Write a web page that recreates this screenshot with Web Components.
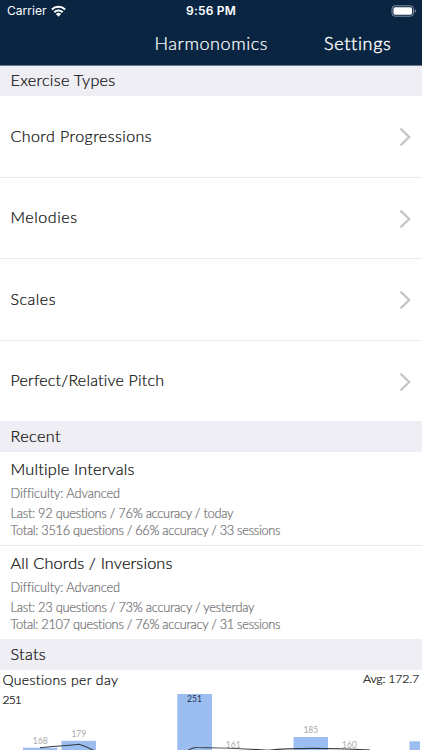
<!DOCTYPE html>
<html lang="en">
<head>
<meta charset="utf-8">
<title>Harmonomics</title>
<style>
html,body{margin:0;height:750px;overflow:hidden;background:#fff}
body{font-family:Lato,"Open Sans",sans-serif;font-weight:300;color:#0a0a0a;-webkit-text-stroke:.22px currentColor}
</style>
</head>
<body>
<harmonomics-app></harmonomics-app>
<script>
const define=(name,html,setup)=>customElements.define(name,class extends HTMLElement{
  connectedCallback(){
    if(this.shadowRoot)return;
    const root=this.attachShadow({mode:'open'});
    const t=document.createElement('template');
    t.innerHTML=html;
    root.append(t.content.cloneNode(true));
    if(setup)setup(this,root);
  }
});

// A single line whose tracking is adjusted so that it spans the given width.
define('fit-text',`<style>:host{display:block;white-space:nowrap}span{display:inline-block}</style><span><slot></slot></span>`,(el,root)=>{
  const s=root.querySelector('span');
  const gap=(+el.getAttribute('w')-s.getBoundingClientRect().width)/el.textContent.length;
  s.style.letterSpacing=gap.toFixed(3)+'px';
});

define('status-bar',`<style>
:host{display:grid;grid-template-columns:1fr auto 1fr;align-items:center;height:22px;padding:0 5px 0 7px;color:#fff;font:12px/22px Inter,sans-serif;-webkit-text-stroke:0}
.l{display:flex;gap:5px;align-items:center}.r{display:flex;justify-content:flex-end}
.c{font-weight:600;margin-right:2px}svg{display:block}
</style>
<div class="l"><fit-text w="39.5">Carrier</fit-text><svg width="15" height="12" viewBox="0 0 15 12" style="margin:-1px 0 0 -1px"><g fill="none" stroke="#fff" stroke-width="2.1"><path d="M.9 4.5a9.3 9.3 0 0 1 13.2 0"/><path d="M3.3 7.2a5.9 5.9 0 0 1 8.4 0"/></g><path d="M7.5 11.7 4.9 9.1a3.7 3.7 0 0 1 5.2 0z" fill="#fff"/></svg></div>
<div class="c"><fit-text w="50">9:56 PM</fit-text></div>
<div class="r"><svg width="26" height="12" viewBox="0 0 26 12" style="margin-top:-1px"><rect x="1" y=".8" width="21.5" height="10.4" rx="3" fill="none" stroke="#8492a2"/><rect x="2.4" y="2.2" width="18.7" height="7.6" rx="1.7" fill="#fff"/><path d="M23.7 4.2q1.4.5 1.4 1.8t-1.4 1.8z" fill="#8492a2"/></svg></div>`);

define('nav-bar',`<style>
:host{display:grid;grid-template-columns:1fr 113px 1fr;height:43px;color:#fff;line-height:42px}
.t{grid-column:2;font-size:18px}.s{padding-left:56.5px;font-size:18px;-webkit-text-stroke:.4px #fff}
</style><fit-text class="t" w="113.5">Harmonomics</fit-text><fit-text class="s" w="67">Settings</fit-text>`);

define('section-header',`<style>
:host{display:block;box-sizing:border-box;height:31px;padding-left:10.5px;background:#efeef5;font-size:16.2px;line-height:30px}
</style><slot></slot>`);

define('exercise-row',`<style>
:host{display:flex;box-sizing:border-box;height:81.5px;justify-content:space-between;align-items:center;padding:0 10.5px;border-bottom:1px solid #ececee;font-size:16px}
:host(:last-of-type){border-bottom:0;height:80.5px}
svg{display:block;margin-top:2px}
::slotted(fit-text){margin-top:-2px}
</style><slot></slot><svg width="13" height="20" viewBox="0 0 13 20"><path d="M1.5 1.7 10.2 10l-8.7 8.3" fill="none" stroke="#c6c6c8" stroke-width="2.3"/></svg>`);

define('recent-item',`<style>
:host{display:block;box-sizing:border-box;height:94px;padding:4px 10.5px 0;border-bottom:1px solid #e8e8ea;color:#727274;font-size:12.8px;line-height:17px}
:host(:last-of-type){border-bottom:0;height:93px}
::slotted([slot=title]){font-size:16.3px;line-height:26px;color:#0a0a0a}
::slotted([slot=level]){margin:3px 0 3px}
</style><slot name="title"></slot><slot name="level"></slot><slot></slot>`);

define('stats-chart',`<style>
:host{display:block;position:relative;height:80px;overflow:hidden;font-size:14px;line-height:20px}
.h{display:flex;justify-content:space-between;padding:0 3px 0 2.5px}
.a{font-size:12.4px;line-height:17px}.m{padding-left:2.5px;font-size:12px}
svg{position:absolute;inset:0}text{font:400 8.5px Lato,sans-serif;-webkit-text-stroke:0;text-anchor:middle;fill:#aaa}
</style>
<div class="h"><fit-text w="116">Questions per day</fit-text><fit-text class="a" w="56">Avg: 172.7</fit-text></div>
<fit-text class="m" w="18.5">251</fit-text>
<svg width="422" height="80" viewBox="0 0 422 80">
<g fill="#9bbdf0"><rect x="23" y="77.7" width="34.3" height="3"/><rect x="61.5" y="70.8" width="34.5" height="10"/><rect x="177.3" y="24" width="34.7" height="56"/><rect x="293.5" y="67" width="34.5" height="13"/><rect x="409.5" y="71.3" width="10.5" height="9"/></g>
<g><text x="40.2" y="74">168</text><text x="78.8" y="67">179</text><text x="233.2" y="78.2">161</text><text x="310.8" y="63">185</text><text x="349.5" y="78.2">160</text><text x="194.5" y="32.4" style="fill:#26344a">251</text></g>
<g fill="none" stroke="#34383f" stroke-width="1.1"><path d="M40 77.7Q67 75.5 79 74.3Q86 76.3 95 81"/><path d="M187 81Q193 77.2 197 77.5C221 77.7 240 78.3 268 80.3C290 78 325 77.8 370 80"/></g>
</svg>`);

define('harmonomics-app',`<style>
:host{display:flex;flex-direction:column;width:422px;height:750px;overflow:hidden;background:#fff}
header{background:#092542;height:65px;border-bottom:1px solid #6d7b8e}
section-header{flex:none}.first{height:30px;line-height:28px}
</style>
<header><status-bar></status-bar><nav-bar></nav-bar></header>
<section-header class="first"><fit-text w="105">Exercise Types</fit-text></section-header>
<section>
<exercise-row><fit-text w="141.5">Chord Progressions</fit-text></exercise-row>
<exercise-row><fit-text w="67">Melodies</fit-text></exercise-row>
<exercise-row><fit-text w="45.5">Scales</fit-text></exercise-row>
<exercise-row><fit-text w="154">Perfect/Relative Pitch</fit-text></exercise-row>
</section>
<section-header><fit-text w="50.5">Recent</fit-text></section-header>
<section>
<recent-item><fit-text slot="title" w="124.5">Multiple Intervals</fit-text><fit-text slot="level" w="108.8">Difficulty: Advanced</fit-text><fit-text w="223">Last: 92 questions / 76% accuracy / today</fit-text><fit-text w="270">Total: 3516 questions / 66% accuracy / 33 sessions</fit-text></recent-item>
<recent-item><fit-text slot="title" w="162">All Chords / Inversions</fit-text><fit-text slot="level" w="108.8">Difficulty: Advanced</fit-text><fit-text w="244">Last: 23 questions / 73% accuracy / yesterday</fit-text><fit-text w="270">Total: 2107 questions / 76% accuracy / 31 sessions</fit-text></recent-item>
</section>
<section-header><fit-text w="35.5">Stats</fit-text></section-header>
<stats-chart></stats-chart>`);
</script>
</body>
</html>
